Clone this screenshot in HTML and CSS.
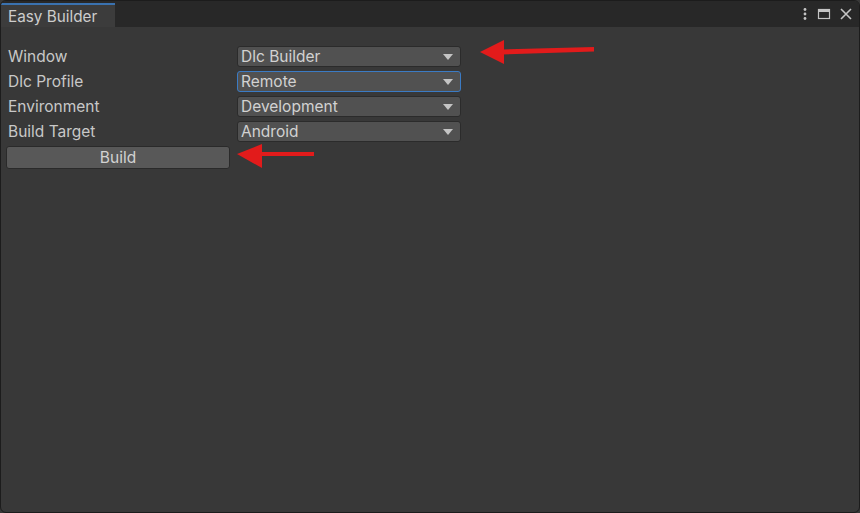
FILE: index.html
```html
<!DOCTYPE html>
<html>
<head>
<meta charset="utf-8">
<link rel="stylesheet" href="styles.css">
</head>
<body>
<div class="window">
  <div class="tabbar">
    <div class="tab">Easy Builder</div>
    <div class="tools">
      <svg class="ico" width="6" height="14" viewBox="0 0 6 14"><circle cx="3" cy="2.5" r="1.4" fill="#c4c4c4"/><circle cx="3" cy="7" r="1.4" fill="#c4c4c4"/><circle cx="3" cy="11.5" r="1.4" fill="#c4c4c4"/></svg>
      <svg class="ico" width="14" height="12" viewBox="0 0 14 12"><rect x="1.5" y="1.5" width="11" height="9" fill="none" stroke="#c4c4c4" stroke-width="1.2"/><rect x="1.5" y="1.5" width="11" height="2.5" fill="#c4c4c4"/></svg>
      <svg class="ico" width="12" height="12" viewBox="0 0 12 12"><path d="M1 1L11 11M11 1L1 11" stroke="#c4c4c4" stroke-width="1.6"/></svg>
    </div>
  </div>
  <div class="content">
    <div class="row"><span class="label">Window</span><div class="dropdown"><span>Dlc Builder</span><i class="caret"></i></div></div>
    <div class="row"><span class="label">Dlc Profile</span><div class="dropdown focused"><span>Remote</span><i class="caret"></i></div></div>
    <div class="row"><span class="label">Environment</span><div class="dropdown"><span>Development</span><i class="caret"></i></div></div>
    <div class="row"><span class="label">Build Target</span><div class="dropdown"><span>Android</span><i class="caret"></i></div></div>
    <button class="build">Build</button>
  </div>
  <svg class="arrow a1" width="120" height="30" viewBox="0 0 120 30">
    <polygon points="0,16 24,4 24,28" fill="#e21b1b"/>
    <polygon points="22,13.5 114,11 114,15.5 22,18.5" fill="#e21b1b"/>
  </svg>
  <svg class="arrow a2" width="80" height="30" viewBox="0 0 80 30">
    <polygon points="0,15 25,5 25,29" fill="#e21b1b"/>
    <polygon points="23,13 77,13 77,17 23,17" fill="#e21b1b"/>
  </svg>
</div>
</body>
</html>
```
FILE: styles.css
```css
html, body {
  margin: 0;
  padding: 0;
  background: #383838;
}
body {
  width: 860px;
  height: 513px;
  overflow: hidden;
  font-family: Inter, "Noto Sans", sans-serif;
}
.window {
  position: relative;
  width: 858px;
  height: 511px;
  border: 1px solid #1c1c1c;
  border-radius: 6px;
  background: #383838;
  overflow: hidden;
}
.tabbar {
  height: 26px;
  background: #282828;
  display: flex;
  align-items: stretch;
}
.tab {
  width: 114px;
  margin-top: 2px;
  border-top: 2px solid #3a72b0;
  background: #3c3c3c;
  color: #cdcdcd;
  font-size: 15.3px;
  padding-left: 7px;
  padding-top: 2px;
  box-sizing: border-box;
  line-height: 19px;
}
.tools {
  margin-left: auto;
  display: flex;
  align-items: center;
  gap: 9px;
  padding-right: 7px;
  margin-top: -1px;
}
.content {
  padding: 17px 0 0 5px;
  display: flex;
  flex-direction: column;
}
.row {
  display: flex;
  align-items: center;
  height: 25px;
}
.label {
  width: 231px;
  box-sizing: border-box;
  padding-left: 2px;
  color: #c8c8c8;
  font-size: 15.5px;
}
.dropdown {
  width: 224px;
  height: 21px;
  box-sizing: border-box;
  background: #515151;
  border: 1px solid #2b2b2b;
  border-radius: 3px;
  display: flex;
  align-items: center;
  padding: 0 7px 0 3px;
  color: #d2d2d2;
  font-size: 15.5px;
}
.dropdown.focused {
  border-color: #3b7bc4;
}
.dropdown span { flex: 1; }
.caret {
  width: 0;
  height: 0;
  border-left: 5px solid transparent;
  border-right: 5px solid transparent;
  border-top: 6px solid #c4c4c4;
}
.build {
  margin-top: 2px;
  width: 224px;
  height: 23px;
  background: #585858;
  border: 1px solid #2a2a2a;
  border-radius: 3px;
  color: #d2d2d2;
  font-family: Inter, "Noto Sans", sans-serif;
  font-size: 15.5px;
  line-height: 20px;
  padding: 0;
}
.arrow {
  position: absolute;
}
.a1 { left: 479px; top: 35px; }
.a2 { left: 236px; top: 138px; }
```
